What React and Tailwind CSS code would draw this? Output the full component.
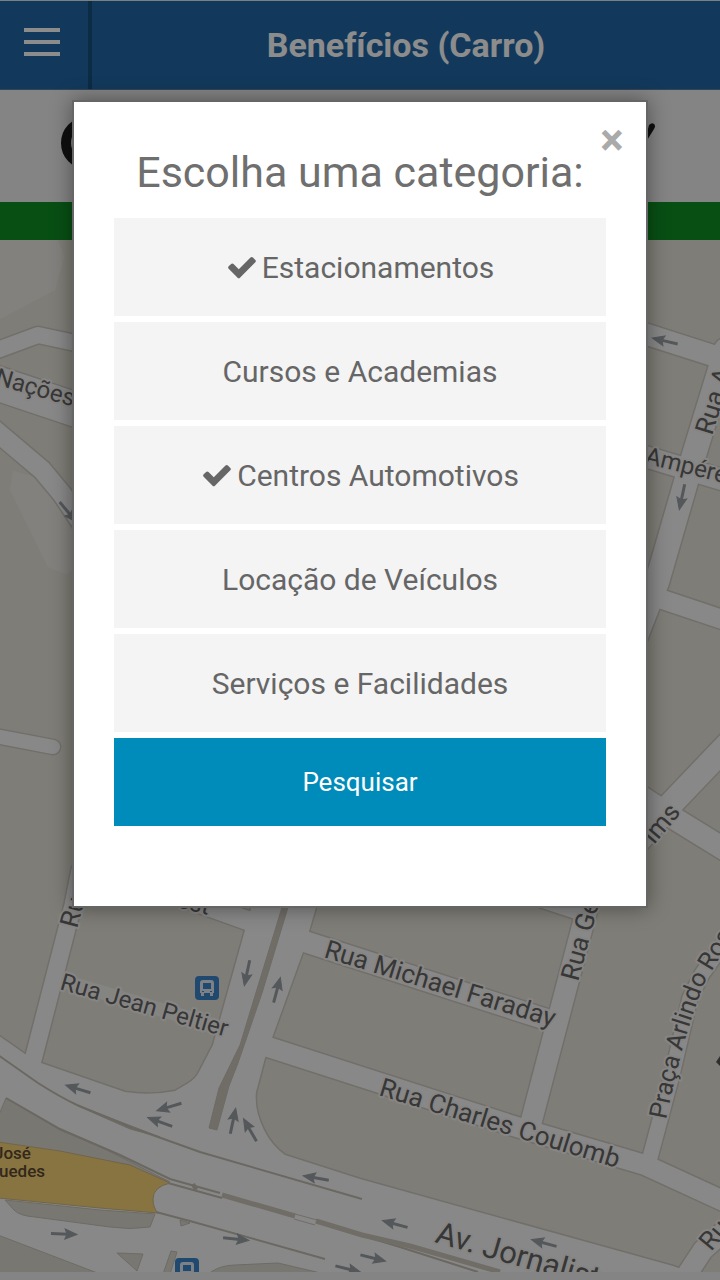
import { useState } from "react";

const CATEGORIES = [
  "Estacionamentos",
  "Cursos e Academias",
  "Centros Automotivos",
  "Locação de Veículos",
  "Serviços e Facilidades",
];

// Streets as centre lines: [path, width]
const STREETS = [
  ["M-5 351 L0 349 L38 335 L80 344", 16],
  ["M-10 381 L80 411", 34],
  ["M-10 426 L42 470 L62 494 L100 550", 19],
  ["M-10 735 L53 747", 14],
  ["M80 870 L73 905 L33 1060", 17],
  ["M630 329 L730 361", 21],
  ["M726 350 L690 468 L657 582 L636 636", 24],
  ["M630 452 L730 482", 21],
  ["M655 597 L730 622", 19],
  ["M732 740 L669 806 L630 850", 24],
  ["M640 796 L672 817 L732 854", 22],
  ["M140 882 L260 925", 19],
  ["M300 940 L548 1020", 21],
  ["M262 1045 L520 1128 L645 1165 L730 1204", 20],
  ["M500 884 L578 910", 19],
  ["M592 890 L529 1130", 21],
  ["M648 1165 L672 1075 L690 998 L702 974 L730 935", 15],
  ["M730 1226 L703 1250 L680 1285", 20],
];

// Junction of the avenue and the expressway
const JUNCTION =
  "M-5 1033 L25 1054 L41 1063 L125 1092 Q150 1096 175 1091 L187 1084 Q196 1079 200 1070 L213 1045 L252 905 L321 890 L303 952 L272 1038 L265 1058 L256 1092 Q254 1110 264 1130 Q272 1146 285 1155 L360 1179 L673 1266 L725 1285 L-5 1285 Z";

// Arrows: [x, y, heading]
const ARROWS = [
  [247, 973, 102], [277, 990, -75], [78, 1089, 197], [169, 1107, 163],
  [160, 1122, 200], [233, 1121, -78], [250, 1130, -120], [316, 1178, 190],
  [64, 1234, 2], [236, 1239, 6], [373, 1258, 14], [348, 1269, 14],
  [395, 1224, 195], [544, 1243, 195], [665, 341, 193], [682, 497, 102],
  [68, 512, 50],
];

// Labels: [text, x, y, rotation, size]
const LABELS = [
  ["Nações", -6, 384, 16, 24],
  ["Rua A", 712, 436, -73, 26],
  ["Ampére", 644, 463, 14, 24],
  ["ims", 654, 845, -50, 26],
  ["Ru", 77, 929, -75, 26],
  ["est", 176, 907, 14, 24],
  ["Rua Jean Peltier", 59, 989, 16, 24],
  ["Rua Michael Faraday", 323, 957, 17, 26],
  ["Rua Charles Coulomb", 378, 1095, 17, 26],
  ["Rua Ge", 578, 982, -75, 26],
  ["Ru", 711, 1252, -50, 26],
  ["Av. Jornalista", 434, 1242, 16, 31],
];

function BusStop({ x, y }) {
  return (
    <g transform={`translate(${x} ${y})`}>
      <rect width="24" height="24" rx="4" fill="#3b86cc" />
      <path d="M5 7q0-3 3-3h8q3 0 3 3v10h-1v3h-3v-3H9v3H6v-3H5z" fill="#e4ebf3" />
      <path d="M8 7h8v6H8z" fill="#3b86cc" />
      <path d="M7 15h2v1H7zM15 15h2v1h-2z" fill="#3b86cc" />
    </g>
  );
}

function StreetMap() {
  return (
    <svg viewBox="0 240 720 1032" className="block h-auto w-full bg-[#e7e4d9]" role="img" aria-label="Mapa">
      <g fill="#efece5">
        <path d="M0 240H58L64 257L55 290L0 319Z" />
        <path d="M13 471L10 490L48 567L66 574L90 560L40 478Z" />
      </g>
      <g fill="none" stroke="#cfcac2" strokeLinecap="round" strokeLinejoin="round">
        {STREETS.map(([d, w]) => (
          <path key={d} d={d} strokeWidth={w + 3} />
        ))}
        <path d={JUNCTION} strokeWidth="3" />
      </g>
      <g fill="none" stroke="#f8f8f8" strokeLinecap="round" strokeLinejoin="round">
        {STREETS.map(([d, w]) => (
          <path key={d} d={d} strokeWidth={w} />
        ))}
        <path d="M60 980L230 1030" strokeWidth="14" opacity=".6" />
      </g>
      <path d={JUNCTION} fill="#f8f8f8" />

      <g fill="#ddd9cf" stroke="#c8c3ba" strokeWidth="1">
        <path d="M-2 1117L6 1098L60 1130L105 1149L170 1182L130 1167L60 1152L-2 1143Z" />
        <path d="M5 1200L100 1210L155 1214L150 1227Q130 1230 110 1227L35 1217Q20 1216 14 1210Z" />
        <path d="M-2 1235L100 1274L-2 1274Z" />
        <path d="M117 1253L143 1254L137 1271Z" />
        <path d="M208 1274Q220 1265 235 1265L278 1263L325 1274Z" />
        <path d="M171 1251L177 1252L170 1274L163 1274Z" />
        <path d="M180 1220L190 1223L181 1226Z" />
        <path d="M283 904L289 904L262 993L238 1063L229 1086L217 1130L209 1128L219 1088L240 1045Z" fill="#cdc7bc" />
        <path d="M78 1106L100 1114L160 1137L130 1129Z" fill="#cdc7bc" />
      </g>
      <path d="M-2 1142L60 1151L130 1165L170 1183Q153 1187 153 1199Q153 1208 158 1213L100 1208L-2 1198Z" fill="#f8d375" stroke="#ccb98a" strokeWidth="1" />
      <g fill="none" stroke="#c3bdb2" strokeWidth="2">
        <path d="M-2 1055L38 1083Q60 1097 77 1105L133 1128L200 1152L362 1199" />
        <path d="M6 1098L60 1129L120 1155L170 1179L220 1193" />
        <path d="M168 1183L222 1198" />
        <path d="M156 1212L190 1221L325 1259" />
        <path d="M360 1235L400 1247L478 1272" />
        <path d="M193 1184L196 1190" strokeWidth="4" />
      </g>
      <path d="M222 1195L295 1216M316 1221L362 1235L410 1246L500 1272" fill="none" stroke="#cdc7bc" strokeWidth="5" />
      <path d="M295 1214L317 1220M294 1219L315 1225" fill="none" stroke="#cdc7bc" strokeWidth="1" />
      <path d="M720 1056L716 1062L720 1066Z" fill="#555" />

      <g fill="#9aa1a7" stroke="#9aa1a7">
        {ARROWS.map(([x, y, a]) => (
          <g key={`${x}-${y}`} transform={`translate(${x} ${y}) rotate(${a})`}>
            <path d="M-13 0H4" strokeWidth="3" />
            <path d="M13 0L1 -5L3 0L1 5Z" strokeWidth="1" />
          </g>
        ))}
      </g>

      <g fontFamily="Roboto, 'Noto Sans', sans-serif" fill="#646464" stroke="#f4f3f0" strokeWidth="4" strokeLinejoin="round" paintOrder="stroke">
        {LABELS.map(([t, x, y, r, s]) => (
          <text key={`${t}-${x}`} transform={`translate(${x} ${y}) rotate(${r})`} fontSize={s}>
            {t}
          </text>
        ))}
        <path id="praca" d="M666 1120C678 1060 690 1020 704 984L740 924" fill="none" stroke="none" />
        <text fontSize="25">
          <textPath href="#praca">Praça Arlindo Ros</textPath>
        </text>
      </g>
      <g fontFamily="Roboto, 'Noto Sans', sans-serif" fontSize="17" fontWeight="500" fill="#5c4a33">
        <text x="-6" y="1159">José</text>
        <text x="-1" y="1177">uedes</text>
      </g>
      <BusStop x={195} y={976} />
      <BusStop x={175} y={1258} />
    </svg>
  );
}

function CheckIcon() {
  return (
    <svg viewBox="0 0 1792 1792" className="size-8 shrink-0" fill="currentColor" aria-hidden="true">
      <path d="M1671 566q0 40-28 68l-724 724-136 136q-28 28-68 28t-68-28l-136-136-362-362q-28-28-28-68t28-68l136-136q28-28 68-28t68 28l294 295 656-657q28-28 68-28t68 28l136 136q28 28 28 68z" />
    </svg>
  );
}

export default function App() {
  const [selected, setSelected] = useState(["Estacionamentos", "Centros Automotivos"]);
  const toggle = (name) =>
    setSelected((list) => (list.includes(name) ? list.filter((n) => n !== name) : [...list, name]));

  return (
    <div className="relative min-h-screen bg-[#f0f0f0] font-['Roboto','Noto_Sans',sans-serif]">
      <header className="flex h-[90px] border-t border-b border-t-[#dfe9f0] border-b-[#5c7f9f] bg-[#2168a7]">
        <button type="button" aria-label="Menu" className="flex w-[92px] flex-col gap-2 border-r-4 border-[#15507f] pt-[27px] pl-6">
          <span className="h-1 w-9 bg-white" />
          <span className="h-1 w-9 bg-white" />
          <span className="h-1 w-9 bg-white" />
        </button>
        <h1 className="flex-1 text-center text-[34px] leading-[88px] font-bold text-white">Benefícios (Carro)</h1>
      </header>

      <div className="flex h-28 items-center justify-center">
        <svg viewBox="0 0 600 48" className="w-5/6 overflow-visible" role="img" aria-label="Logo">
          <path d="M26 0A20 21 0 0 0 26 42" fill="none" stroke="#1c1c1c" strokeWidth="10" />
          <path d="M584 22L589 3Q592 0 594 2Q596 4 594 7L586 20L572 40Z" fill="#1c1c1c" />
        </svg>
      </div>
      <div className="h-[38px] bg-[#0f9026]" />
      <StreetMap />

      <div className="absolute inset-0 bg-black/45 pt-[100px]">
        <section role="dialog" aria-modal="true" aria-labelledby="dialog-title" className="relative mx-auto w-4/5 border-2 border-[#666] bg-white px-10 pt-10 pb-20 text-[#666] shadow-[0_0_20px_rgba(0,0,0,0.4)]">
          <button type="button" aria-label="Fechar" className="absolute top-4 right-3 size-11 text-[44px] leading-[44px] font-bold text-[#aaa]">
            ×
          </button>
          <h2 id="dialog-title" className="pb-4 text-center text-[43px] leading-[60px] text-[#6f6f6f]">Escolha uma categoria:</h2>
          <div className="flex flex-col gap-1.5">
            {CATEGORIES.map((name) => (
              <button
                key={name}
                type="button"
                aria-pressed={selected.includes(name)}
                onClick={() => toggle(name)}
                className="flex h-[98px] items-center justify-center gap-1 bg-[#f4f4f4] text-[30px]"
              >
                {selected.includes(name) && <CheckIcon />}
                {name}
              </button>
            ))}
            <button type="button" className="h-[88px] bg-[#008cba] text-[26px] text-white">Pesquisar</button>
          </div>
        </section>
      </div>
    </div>
  );
}
